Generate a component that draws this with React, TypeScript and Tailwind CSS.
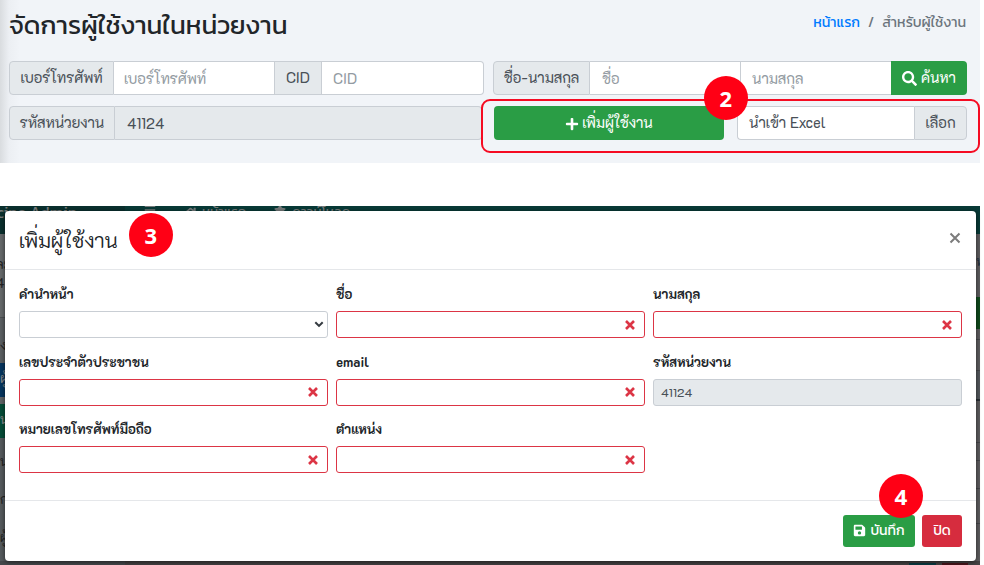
import type { ReactNode } from 'react';
import { FaPlus, FaSearch, FaSave, FaHome, FaBars, FaStar } from 'react-icons/fa';

const addon = 'flex items-center justify-center shrink-0 bg-[#e5e9ec] text-[#495057] border-[#c9ced4] pt-px whitespace-nowrap';
const input = 'flex items-center shrink-0 bg-white text-[#939ba2] border-[#c9ced4] pl-[10px] pt-[3px] whitespace-nowrap';

function Badge({ n, className }: { n: number; className: string }) {
  return (
    <div className={`absolute z-10 flex size-11 items-center justify-center rounded-full bg-[#ff0015] pb-[3px] font-['Noto_Sans_Thai_Looped','Noto_Sans',sans-serif] text-[22px] leading-none font-bold text-white ${className}`}>
      {n}
    </div>
  );
}

function Chevron() {
  return (
    <svg viewBox="0 0 10 7" className="h-[7px] w-[10px]" fill="none" stroke="#343a40" strokeWidth="2">
      <path d="M1.3 1.2 5 4.9 8.7 1.2" />
    </svg>
  );
}

function Cross() {
  return (
    <svg viewBox="0 0 10 10" className="size-[10px]" fill="none" stroke="#dc3545" strokeWidth="2.6">
      <path d="M1 1 9 9M9 1 1 9" />
    </svg>
  );
}

function Field({ label, kind = 'invalid', children }: { label: string; kind?: string; children?: ReactNode }) {
  const look =
    kind === 'invalid'
      ? 'border-[#dc3545] bg-white justify-end pr-[9px]'
      : kind === 'select'
        ? 'border-[#c9ced4] bg-white justify-end pr-[3px]'
        : 'border-[#c9ced4] bg-[#e5e9ec] pl-[7px] text-[12.2px] text-[#495057]';
  return (
    <div>
      <div className="h-[26px] text-[13.2px] leading-[18px] font-bold whitespace-nowrap text-[#212529]">{label}</div>
      <div className={`flex h-[27px] items-center rounded-[3px] border ${look}`}>{kind === 'invalid' ? <Cross /> : children}</div>
    </div>
  );
}

function Backdrop() {
  return (
    <div className="absolute inset-0 flex overflow-hidden bg-[#444243]">
      <div className="flex w-[125px] shrink-0 flex-col bg-[#606467]">
        <div className="flex h-7 shrink-0 justify-end bg-[#0a302e] pr-[48px] font-['Kanit',sans-serif] text-[16px] leading-[12px] whitespace-nowrap text-[#777c7c]">
          Telemedicine Admin
        </div>
        <div className="h-[83px] w-[5px] shrink-0 overflow-hidden bg-[#65696b] pt-5 text-[13px] leading-[19px] text-[#222]">
          <div className="-ml-1">ละ</div>
          <div className="-ml-1">4</div>
        </div>
        <div className="h-[46px] w-[5px] shrink-0 overflow-hidden border-t border-[#4b4f51] bg-[#5b5f62] pt-5 text-[13px] text-[#222]">ง</div>
        <div className="h-[34px] w-[5px] shrink-0 overflow-hidden bg-[#07365f] pt-2 text-[14px] text-[#888]">ผู้</div>
        <div className="h-[7px] shrink-0" />
        <div className="h-[34px] w-[5px] shrink-0 overflow-hidden bg-[#064d38] pt-2 text-[13px] text-[#888]">น</div>
        <div className="w-[5px] grow overflow-hidden bg-[#555a5d] pt-1 text-[13px] leading-[38px] text-[#222]">
          <div>น</div>
          <div>ก</div>
          <div>ผู้</div>
        </div>
        <div className="h-1 shrink-0 bg-[#45494c]" />
      </div>
      <div className="flex grow flex-col bg-[#5e5d5f]">
        <div className="flex h-7 shrink-0 items-start bg-[#083a37] pl-[19px] font-['Kanit',sans-serif] text-[13.4px] leading-[11px] text-[#777c7c]">
          <FaBars className="mr-[27px] -mt-0.5 size-3" />
          <FaHome className="mr-1 size-[15px] shrink-0" />
          <span className="mr-[28px] whitespace-nowrap">หน้าแรก</span>
          <FaStar className="mr-1.5 -mt-0.5 size-3" />
          <span className="whitespace-nowrap">ดาวน์โหลด</span>
        </div>
        <div className="ml-auto h-[63px] w-1 overflow-hidden pt-5 text-[13px] text-[#1f3040]">ห</div>
        <div className="ml-auto h-8 w-1 bg-[#104a1c]" />
        <div className="ml-auto h-[10px] w-1" />
        <div className="ml-auto h-[32px] w-1 border-y border-[#46484b]" />
        <div className="ml-auto h-[30px] w-1 border-b-2 border-[#2b3035] bg-[#54585c]" />
        <div className="ml-auto h-[42px] w-1 border-b border-[#46484b]" />
        <div className="ml-auto h-[18px] w-1 border-b border-[#46484b]" />
        <div className="ml-auto h-[28px] w-1 border-b border-[#46484b]" />
        <div className="ml-auto h-[35px] w-1 border-b border-[#46484b]" />
        <div className="mt-auto flex h-1 justify-end gap-[6px] bg-[#444243] pr-3">
          <div className="mt-[2px] w-[27px] bg-[#0a3a42]" />
          <div className="mt-[2px] w-[26px] bg-[#4a151b]" />
        </div>
      </div>
    </div>
  );
}

export default function App() {
  return (
    <div className="h-[565px] w-[984px] overflow-hidden bg-white font-['K2D','Noto_Sans_Thai_Looped',sans-serif] text-[14.6px] leading-none">
      <div className="relative h-[163px] w-[980px] bg-[linear-gradient(to_right,#d9dcdf_0px,#eceff3_9px,#f1f4f8_20px)] pr-[14px] pl-[9px]">
        <div className="flex h-[61px] justify-between font-['Kanit','Noto_Sans_Thai',sans-serif]">
          <div className="pt-[7px] text-[26px] leading-[36px] whitespace-nowrap text-[#212529]">จัดการผู้ใช้งานในหน่วยงาน</div>
          <div className="flex gap-2 pt-[13px] text-[14.2px] leading-[18px] whitespace-nowrap text-[#6c757d]">
            <span className="text-[#007bff]">หน้าแรก</span>
            <span>/</span>
            <span>สำหรับผู้ใช้งาน</span>
          </div>
        </div>

        <div className="-mr-px flex h-[34px]">
          <div className={`${addon} w-[105px] rounded-l border`}>เบอร์โทรศัพท์</div>
          <div className={`${input} w-[160px] border-y`}>เบอร์โทรศัพท์</div>
          <div className={`${addon} w-[48px] border`}>CID</div>
          <div className={`${input} mr-[9px] w-[162px] rounded-r border-y border-r pl-[11px]`}>CID</div>
          <div className={`${addon} w-[97px] rounded-l border`}>ชื่อ-นามสกุล</div>
          <div className={`${input} w-[151px] border-y border-r pl-[12px]`}>ชื่อ</div>
          <div className={`${input} w-[150px] border-y pl-[11px]`}>นามสกุล</div>
          <div className="flex grow items-center justify-center gap-1 rounded-r bg-[#2a9d45] whitespace-nowrap text-white">
            <FaSearch className="size-[15px]" />
            <span>ค้นหา</span>
          </div>
        </div>

        <div className="-mr-px mt-[11px] flex h-[34px]">
          <div className={`${addon} w-[106px] rounded-l border`}>รหัสหน่วยงาน</div>
          <div className="mr-3 flex w-[367px] shrink-0 items-center rounded-r border-y border-r border-[#c9ced4] bg-[#e5e9ec] pt-[2px] pl-[12px] text-[#495057]">41124</div>
          <div className="mr-[13px] flex w-[230px] shrink-0 items-center justify-center gap-[3px] rounded bg-[#2a9d45] pt-px whitespace-nowrap text-white">
            <FaPlus className="size-[14px]" />
            <span>เพิ่มผู้ใช้งาน</span>
          </div>
          <div className="flex w-[177px] shrink-0 items-center rounded-l border-y border-l border-[#c9ced4] bg-white pt-px pl-[11px] whitespace-nowrap text-[#495057]">นำเข้า Excel</div>
          <div className={`${addon} w-[53px] rounded-r border`}>เลือก</div>
        </div>

        <div className="absolute top-[99px] left-[481px] h-[54px] w-[499px] rounded-[9px] border-2 border-[#f50b22]" />
        <Badge n={2} className="top-[76px] left-[704px]" />
      </div>

      <div className="relative mt-[43px] h-[359px] w-[980px] pt-[5px] pl-[5px]">
        <Backdrop />
        <div className="relative flex h-[350px] w-[971px] flex-col rounded-[4px] bg-white shadow-[0_1px_5px_rgba(0,0,0,0.6)]">
          <div className="flex h-[59px] shrink-0 justify-between border-b border-[#e5e7ea] pr-[14px] pl-[14px]">
            <div className="pt-[14px] text-[20.6px] leading-[30px] font-light whitespace-nowrap text-[#212529]">เพิ่มผู้ใช้งาน</div>
            <svg viewBox="0 0 14 14" className="mt-[20px] size-[14px]" fill="none" stroke="#7c7c7c" strokeWidth="2">
              <path d="M2.5 2.5 11.5 11.5M11.5 2.5 2.5 11.5" />
            </svg>
          </div>
          <div className="grid shrink-0 grow grid-cols-3 content-start gap-x-2 gap-y-[14.5px] px-[14px] pt-[15px]">
            <Field label="คำนำหน้า" kind="select">
              <Chevron />
            </Field>
            <Field label="ชื่อ" />
            <Field label="นามสกุล" />
            <Field label="เลขประจำตัวประชาชน" />
            <Field label="email" />
            <Field label="รหัสหน่วยงาน" kind="readonly">
              41124
            </Field>
            <Field label="หมายเลขโทรศัพท์มือถือ" />
            <Field label="ตำแหน่ง" />
          </div>
          <div className="flex h-[61px] shrink-0 justify-end gap-[7px] border-t border-[#e5e7ea] pt-[14px] pr-[14px] font-['Kanit','Noto_Sans_Thai',sans-serif] text-[14px] text-white">
            <div className="flex h-[32px] w-[72px] items-center justify-center gap-1 rounded-[3px] bg-[#2a9d45] whitespace-nowrap">
              <FaSave className="mb-px size-[13px]" />
              <span>บันทึก</span>
            </div>
            <div className="flex h-[32px] w-[40px] items-center justify-center rounded-[3px] bg-[#d62c3e] whitespace-nowrap">ปิด</div>
          </div>
        </div>
        <Badge n={3} className="top-[7px] left-[129px]" />
        <Badge n={4} className="top-[268px] left-[879px]" />
      </div>
    </div>
  );
}
